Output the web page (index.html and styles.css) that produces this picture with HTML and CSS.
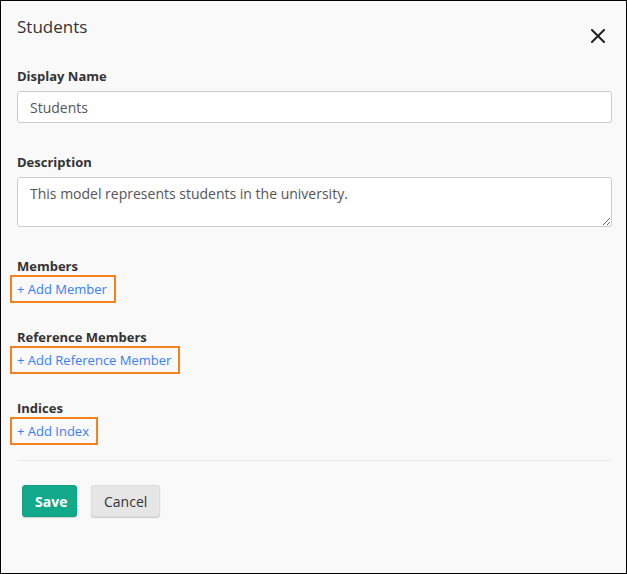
FILE: index.html
```html
<!DOCTYPE html>
<html>
<head>
<meta charset="utf-8">
<link rel="stylesheet" href="styles.css">
</head>
<body>
<div class="modal">
  <div class="header">
    <h1 class="title">Students</h1>
    <button class="close" aria-label="Close">
      <svg width="14" height="14" viewBox="0 0 14 14"><path d="M1 1 L13 13 M13 1 L1 13" stroke="#222" stroke-width="2" stroke-linecap="square"/></svg>
    </button>
  </div>
  <div class="group">
    <label class="label">Display Name</label>
    <input class="input" type="text" value="Students">
  </div>
  <div class="group">
    <label class="label">Description</label>
    <textarea class="input textarea">This model represents students in the university.</textarea>
  </div>
  <div class="section">
    <div class="label tight">Members</div>
    <a class="add" href="#">+ Add Member</a>
  </div>
  <div class="section">
    <div class="label tight">Reference Members</div>
    <a class="add" href="#">+ Add Reference Member</a>
  </div>
  <div class="section last">
    <div class="label tight">Indices</div>
    <a class="add" href="#">+ Add Index</a>
  </div>
  <div class="footer">
    <button class="btn save">Save</button>
    <button class="btn cancel">Cancel</button>
  </div>
</div>
</body>
</html>
```
FILE: styles.css
```css
* { box-sizing: border-box; }
html, body { margin: 0; padding: 0; }
body {
  font-family: "Open Sans", "Noto Sans", sans-serif;
  color: #333;
  background: #fff;
}
.modal {
  width: 627px;
  height: 574px;
  border: 1px solid #000;
  background: #f9f9f9;
  padding: 14px 14px 0 16px;
}
.header {
  display: flex;
  justify-content: space-between;
  align-items: flex-start;
  height: 52px;
}
.title {
  margin: 0;
  font-size: 17px;
  line-height: 24px;
  font-weight: 400;
  color: #333;
}
.close {
  border: 0;
  background: none;
  padding: 0;
  margin: 14px 7px 0 0;
  width: 14px;
  height: 14px;
  display: flex;
}
.group { margin-bottom: 30px; }
.label {
  display: block;
  font-size: 13px;
  line-height: 18px;
  font-weight: 700;
  color: #333;
  margin-bottom: 6px;
}
.label.tight { margin-bottom: 0; }
.input {
  display: block;
  width: 595px;
  height: 32px;
  border: 1px solid #ccc;
  border-radius: 3px;
  background: #fff;
  font-family: inherit;
  font-size: 14px;
  color: #555;
  padding: 0 12px;
  outline: none;
}
.textarea {
  height: 50px;
  padding: 6px 12px;
  line-height: 20px;
  resize: vertical;
}
.section { margin-bottom: 25px; }
.section.last { margin-bottom: 0; }
.add {
  display: inline-block;
  vertical-align: top;
  margin-left: -7px;
  border: 2px solid #f5821f;
  padding: 2px 7px 2px 5px;
  height: 28px;
  font-size: 13px;
  line-height: 20px;
  color: #3a80f0;
  text-decoration: none;
}
.footer {
  margin-top: 15px;
  width: 595px;
  border-top: 1px solid #e8e8e8;
  padding: 24px 0 0 5px;
  display: flex;
  gap: 14px;
}
.btn {
  height: 32px;
  border-radius: 3px;
  font-family: inherit;
  font-size: 14px;
  padding: 0 12px;
  cursor: pointer;
}
.save {
  width: 55px;
  background: #12a88a;
  border: 1px solid #10a084;
  color: #fff;
  font-weight: 700;
  box-shadow: 0 1px 1px rgba(0,0,0,0.15);
}
.cancel {
  width: 69px;
  background: #e6e6e6;
  border: 1px solid #dcdcdc;
  color: #333;
  box-shadow: 0 1px 1px rgba(0,0,0,0.18);
}
```
